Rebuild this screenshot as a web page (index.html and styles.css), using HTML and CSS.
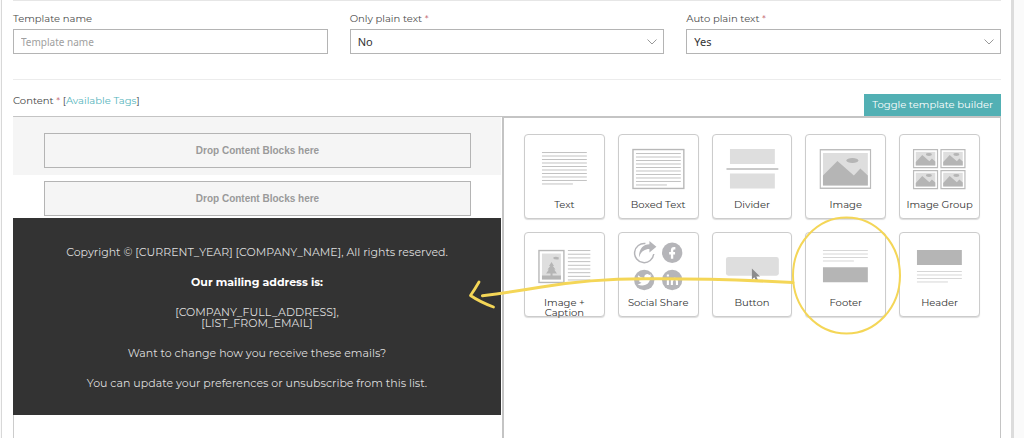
FILE: index.html
```html
<!DOCTYPE html>
<html lang="en">
<head>
<meta charset="utf-8">
<title>Email template</title>
<link rel="stylesheet" href="styles.css">
</head>
<body>
<svg class="defs" aria-hidden="true">
  <symbol id="picture" viewBox="0 0 52 40" preserveAspectRatio="none">
    <rect x="0.7" y="0.7" width="50.6" height="38.6" fill="#fff" stroke="#bbb" stroke-width="1.4"/>
    <path fill="#dedede" d="M3.5 4h45v32.500h-45z"/>
    <path fill="#b5b5b5" d="M3.500 26.500 18 12l16.500 14.500 6.500-7 7.500 7V36.500h-45z"/>
    <ellipse cx="33" cy="11.500" rx="6" ry="2.600" fill="#b5b5b5"/>
  </symbol>
</svg>
<main class="card">
  <form class="form">
    <div class="fields">
      <div class="field">
        <label for="name">Template name</label>
        <input class="control" id="name" type="text" placeholder="Template name">
      </div>
      <div class="field">
        <label for="only">Only plain text <span class="required">*</span></label>
        <select class="control select" id="only"><option>No</option><option>Yes</option></select>
      </div>
      <div class="field">
        <label for="auto">Auto plain text <span class="required">*</span></label>
        <select class="control select" id="auto"><option>Yes</option><option>No</option></select>
      </div>
    </div>
    <div class="content-bar">
      <div class="content-label">Content <span class="required">*</span> [<a href="#tags">Available Tags</a>]</div>
      <button class="toggle" type="button">Toggle template builder</button>
    </div>
    <div class="builder">
      <section class="canvas">
        <div class="band"><div class="drop">Drop Content Blocks here</div></div>
        <div class="band band-plain"><div class="drop">Drop Content Blocks here</div></div>
        <div class="mail-footer">
          <p>Copyright © [CURRENT_YEAR] [COMPANY_NAME], All rights reserved.</p>
          <p><strong>Our mailing address is:</strong></p>
          <p>[COMPANY_FULL_ADDRESS],<br>[LIST_FROM_EMAIL]</p>
          <p>Want to change how you receive these emails?</p>
          <p>You can update your preferences or unsubscribe from this list.</p>
        </div>
      </section>
      <section class="palette">
        <ul class="tiles">
          <li><button class="tile" type="button">
            <svg class="icon" viewBox="1 1 79 63"><path class="rule" d="M18 17.500h45M18 21h45M18 24.500h45M18 28h45M18 31.500h45M18 35h45M18 38.500h45M18 42h45M18 45.500h45M18 49h31"/></svg>
            <span>Text</span></button></li>
          <li><button class="tile" type="button">
            <svg class="icon" viewBox="1 1 79 63"><rect x="15" y="14.500" width="51" height="39" fill="none" stroke="#b8b8b8" stroke-width="1.400"/><path class="rule" d="M18 18.500h45M18 22h45M18 25.500h45M18 29h45M18 32.500h45M18 36h45M18 39.500h45M18 43h45M18 46.500h45M18 50h31"/></svg>
            <span>Boxed Text</span></button></li>
          <li><button class="tile" type="button">
            <svg class="icon" viewBox="1 1 79 63"><path fill="#dedede" d="M18 14h45v15H18zM18 38.500h45v15H18z"/><path stroke="#b8b8b8" stroke-width="1.500" d="M14.500 34H66.500"/></svg>
            <span>Divider</span></button></li>
          <li><button class="tile" type="button">
            <svg class="icon" viewBox="1 1 79 63"><use href="#picture" x="14.500" y="14" width="52" height="40"/></svg>
            <span>Image</span></button></li>
          <li><button class="tile" type="button">
            <svg class="icon" viewBox="1 1 79 63">
              <g id="mini"><path fill="#fff" stroke="#bbb" stroke-width="1.200" d="M14.600 14.600h24v18h-24z"/><path fill="#dedede" d="M16.800 16.800h19.600v13.600H16.800z"/><path fill="#b5b5b5" d="m16.800 27 6.500-7 7.200 6.200 2.500-2.700 3.400 3v4H16.800z"/><ellipse cx="30" cy="19.500" rx="3" ry="1.500" fill="#b5b5b5"/></g>
              <use href="#mini" x="27.500"/><use href="#mini" y="21"/><use href="#mini" x="27.500" y="21"/>
            </svg>
            <span>Image Group</span></button></li>
          <li><button class="tile" type="button">
            <svg class="icon" viewBox="1 1 79 63"><rect x="15" y="17.500" width="25" height="32" fill="#fff" stroke="#b8b8b8" stroke-width="1.400"/><path fill="#dedede" d="M18 20.500h19v26H18z"/><path fill="#b5b5b5" d="M18 42.500h19v4H18zM26.600 39h2v4h-2zM27.600 29l2.500 4h-1.200l2.700 3.500h-1.300l2.700 4H22.200l2.700-4h-1.300l2.700-3.500h-1.200z"/><path fill="#b5b5b5" d="M29 25q2-2 6-.6l-.5 2q-4 .5-5.500-1.400z"/><path class="rule" d="M44 17.500h22.500M44 21.200h22.500M44 24.900h22.500M44 28.600h22.500M44 32.300h22.500M44 36h22.500M44 39.700h22.500M44 43.400h22.500M44 47h22.500"/></svg>
            <span>Image +<br>Caption</span></button></li>
          <li><button class="tile" type="button">
            <svg class="icon" viewBox="1 1 79 63">
              <path fill="none" stroke="#b5b5b9" stroke-width="1.500" d="M27.500 10.500A9.600 9.600 0 1 0 35.800 21"/>
              <path fill="#b5b5b9" d="M21 24.500C21 16 25 11.500 31.500 11.300V8l7 5.700-7 5.700V16C26.500 16 23 18.500 21 24.500z"/>
              <circle cx="54.300" cy="19.700" r="10.200" fill="#b5b5b9"/>
              <circle cx="26.300" cy="47" r="10.200" fill="#b5b5b9"/>
              <circle cx="54.300" cy="47" r="10.200" fill="#b5b5b9"/>
              <path fill="none" stroke="#fff" stroke-width="2.400" d="M57.500 15.200h-1.200q-2.100 0-2.100 2.200v8.400M51.300 20.200h5.900"/>
              <path fill="#fff" d="M20.200 42.200q2.600 2.900 6.300 3.100-.6-4 2.700-4.300 1.300 0 2.100.9l1.900-.7-.9 1.700 1.500-.4-1.500 1.700q0 5.500-4.700 7.700-4.200 1.600-8-.7 2.500 0 4-1.300-2.100-.3-2.800-2h1.300q-2.200-.9-2.300-2.900l1.300.3q-2-1.700-.9-3.100z"/>
              <path fill="none" stroke="#fff" stroke-width="2.100" d="M50 45v7M54 52v-7M54 48.500q.5-2.700 2.800-2.700 2.300.2 2.300 3V52M50 41.500v2"/>
            </svg>
            <span>Social Share</span></button></li>
          <li><button class="tile" type="button">
            <svg class="icon" viewBox="1 1 79 63"><rect x="14" y="24" width="53" height="18.700" rx="2.500" fill="#dedede"/><path fill="#8c8c8c" d="M40 35.500v11l2.500-2.200 1.700 3.800 2-.8-1.700-3.800h3.700z"/></svg>
            <span>Button</span></button></li>
          <li class="marked"><button class="tile" type="button">
            <svg class="icon" viewBox="1 1 79 63"><path class="rule rule-light" d="M18 17.500h45M18 21h45M18 24.500h45M18 28h31"/><path fill="#b5b5b5" d="M18 34.300h45v15H18z"/></svg>
            <span>Footer</span></button>
            <svg class="annotation" viewBox="465 210 440 130" aria-hidden="true">
              <g fill="none" stroke="#f4d657" stroke-linecap="round">
                <ellipse cx="846.500" cy="275.500" rx="53.500" ry="58" stroke-width="2"/>
                <path stroke-width="3" d="M793 282.500C745 280 690 278.500 645 278.800 595 278.800 565 283 540 287.300 515 291.500 500 293.500 482.500 295.700"/>
                <path stroke-width="2.800" stroke-linejoin="round" d="M479 282Q475 289 470.500 295.500 480 302 493.500 307"/>
              </g>
            </svg>
          </li>
          <li><button class="tile" type="button">
            <svg class="icon" viewBox="1 1 79 63"><path fill="#b5b5b5" d="M18 17h45v15H18z"/><path class="rule rule-light" d="M18 38.500h45M18 42h45M18 45.500h45M18 49h31"/></svg>
            <span>Header</span></button></li>
        </ul>
      </section>
    </div>
  </form>
</main>
</body>
</html>
```
FILE: styles.css
```css
* { box-sizing: border-box; }

body {
  margin: 0;
  background: #fafafa;
  color: #4c4c4c;
  font: 10px/14px Montserrat, Inter, sans-serif;
}

.defs { position: absolute; width: 0; height: 0; }

.card {
  display: flex;
  min-height: 100vh;
  margin: 0 10px 0 1px;
  padding: 0 10px;
  background: #fff;
  border-left: 1px solid #d8d8d8;
  border-right: 3px solid #dcdcdc;
  overflow: hidden;
}

.form {
  flex: 1;
  display: flex;
  flex-direction: column;
  margin-left: 1px;
  border-top: 1px solid #e6e6e6;
}

.fields {
  display: grid;
  grid-template-columns: repeat(3, 1fr);
  gap: 22px;
  padding: 11px 0 25px;
  border-bottom: 1px solid #ececec;
}

.field { display: flex; flex-direction: column; gap: 3px; }

.required { color: #c0606a; }

.control {
  width: 100%;
  height: 25px;
  padding: 0 7px;
  border: 1px solid #b4b4b4;
  border-radius: 0;
  background: #fff;
  color: #333;
  font: 10px/14px "Noto Sans", "Open Sans", sans-serif;
}

.control::placeholder { color: #a0a0a0; }

.select {
  appearance: none;
  background: #fff url("data:image/svg+xml,%3Csvg xmlns='http://www.w3.org/2000/svg' width='10' height='6'%3E%3Cpath d='M.5.5 5 5 9.500.5' fill='none' stroke='%23999'/%3E%3C/svg%3E") no-repeat right 6px center;
  font-size: 11px;
}

.content-bar {
  display: flex;
  justify-content: space-between;
  padding-top: 14px;
}

.content-label { color: #444; }

.content-label a { color: #54b4bc; text-decoration: none; }

.toggle {
  height: 22px;
  padding: 0 8px;
  border: 0;
  background: #52b0b4;
  color: #fff;
  font: inherit;
}

.builder {
  flex: 1;
  display: grid;
  grid-template-columns: 489fr 499fr;
}

.canvas {
  padding-right: 1px;
  border-top: 1px solid #c4c4c4;
  border-left: 1px solid #ccc;
}

.band {
  margin-left: -1px;
  padding: 16px 30px 7px 31px;
  background: #f5f5f5;
}

.band-plain { padding-top: 6px; padding-bottom: 2px; background: #fff; }

.drop {
  padding: 9px;
  border: 1px solid #b4b4b4;
  background: #f5f5f5;
  color: #9a9a9a;
  font: bold 10px/15px "Liberation Sans", Arial, sans-serif;
  text-align: center;
}

.mail-footer {
  display: grid;
  gap: 19px;
  margin-left: -1px;
  padding: 29px 20px 26px;
  background: #333;
  color: #dedede;
  font-size: 11px;
  line-height: 11px;
  text-align: center;
}

.mail-footer p { margin: 0; }

.mail-footer strong { color: #fff; }

.palette {
  padding: 16px 20px;
  border: solid #c4c4c4;
  border-width: 2px 1px 0 2px;
}

.tiles {
  display: grid;
  grid-template-columns: repeat(5, 1fr);
  gap: 13px;
  margin: 0;
  padding: 0;
  list-style: none;
}

.tile {
  display: block;
  width: 100%;
  height: 85px;
  padding: 0;
  border: 1px solid #ccc;
  border-radius: 4px;
  box-shadow: 0 1px 1px #ddd;
  background: #fff;
  color: #333;
  font: 10px/10px Montserrat, Inter, sans-serif;
  text-align: center;
  white-space: nowrap;
}

.icon { display: block; width: 100%; height: 65px; }

.tile span { display: block; height: 18px; }

.rule { stroke: #c2c2c2; stroke-width: 1; }

.rule-light { stroke: #d6d6d6; }

.marked { position: relative; }

.annotation {
  position: absolute;
  top: -22px;
  left: -340px;
  width: 440px;
  height: 130px;
  pointer-events: none;
}
```
